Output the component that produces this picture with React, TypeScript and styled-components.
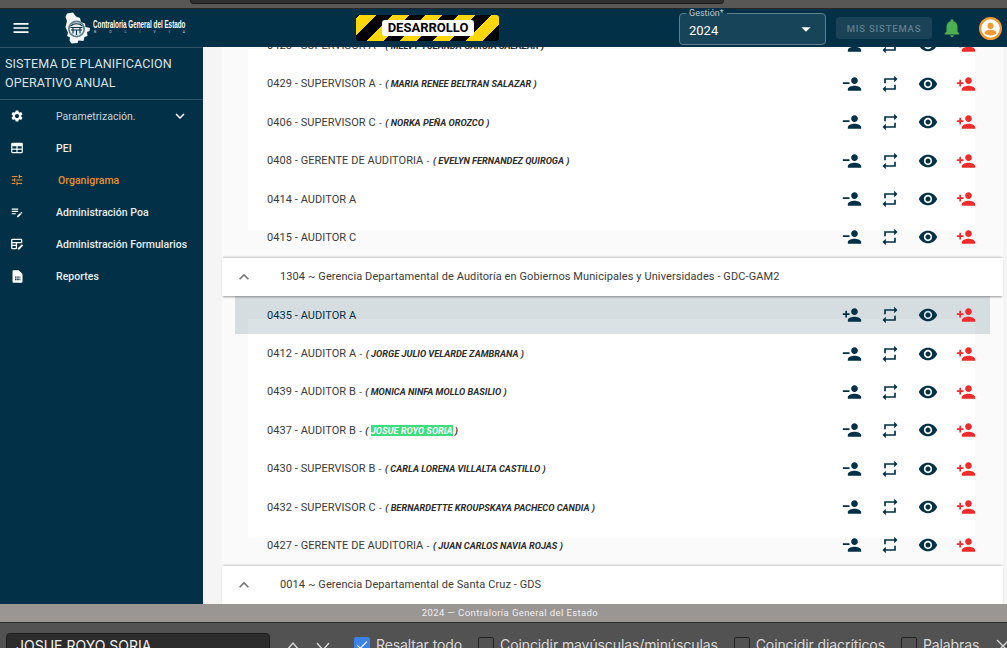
import React from "react";
import styled, { createGlobalStyle } from "styled-components";
import {
  MdMenu,
  MdSettings,
  MdExpandMore,
  MdExpandLess,
  MdTune,
  MdEditNote,
  MdNotifications,
  MdArrowDropDown,
  MdRepeat,
  MdVisibility,
  MdPersonAdd,
  MdCheck,
} from "react-icons/md";

const NAVY = "#023047";

const GlobalStyle = createGlobalStyle`
  html, body {
    margin: 0;
    height: 100%;
    overflow: hidden;
    background: #f5f5f5;
    font-family: Roboto, "Liberation Sans", sans-serif;
  }
  #root { height: 100%; }
`;

const PersonRemove = () => (
  <svg viewBox="0 0 24 24" width="20" height="20" fill="currentColor">
    <path d="M15 12c2.21 0 4-1.79 4-4s-1.79-4-4-4-4 1.79-4 4 1.79 4 4 4zM1 10v2h8v-2H1zm14 4c-2.67 0-8 1.34-8 4v2h16v-2c0-2.66-5.33-4-8-4z" />
  </svg>
);

const TableIcon = () => (
  <svg viewBox="0 0 24 24" width="14" height="14" fill="currentColor">
    <path
      fillRule="evenodd"
      d="M20 3H4c-1.100 0-2 .9-2 2v14c0 1.100.9 2 2 2h16c1.100 0 2-.9 2-2V5c0-1.100-.9-2-2-2zM4 9h7v4H4V9zm9 0h7v4h-7V9zM4 15h7v4H4v-4zm9 0h7v4h-7v-4z"
    />
  </svg>
);

const FormIcon = () => (
  <svg viewBox="0 0 24 24" width="14" height="14" fill="none" stroke="currentColor">
    <path strokeWidth="2.200" d="M20 10V5a1 1 0 0 0-1-1H4a1 1 0 0 0-1 1v14a1 1 0 0 0 1 1h7M3 9.500h17M3 14.500h9M11 9.500V20" />
    <path strokeWidth="3.200" d="M14 21l7.500-7.500" />
  </svg>
);

const ReportIcon = () => (
  <svg viewBox="0 0 24 24" width="15" height="15" fill="currentColor">
    <path
      fillRule="evenodd"
      d="M14 2H6c-1.100 0-2 .9-2 2v16c0 1.100.9 2 2 2h12c1.100 0 2-.9 2-2V8l-6-6zM8 12h2.500v2H8v-2zm3.500 0H14v2h-2.500v-2zm3.500 0h1.500v2H15v-2zM8 15h2.500v3H8v-3zm3.500 0H14v3h-2.500v-3zm3.500 0h1.500v3H15v-3z"
    />
  </svg>
);

const AvatarIcon = () => (
  <svg viewBox="0 0 24 24" width="23" height="23">
    <circle cx="12" cy="12" r="12" fill="#f39a32" />
    <circle cx="12" cy="12" r="9.600" fill="#fff" />
    <circle cx="12" cy="9.300" r="3.200" fill="#f39a32" />
    <path d="M5.800 16.600c0-2.200 4.100-3.200 6.200-3.200s6.200 1 6.200 3.200v.6c-1.300 1.100-3.800 2-6.200 2s-4.900-.9-6.200-2v-.6z" fill="#f39a32" />
  </svg>
);

const LogoMark = () => (
  <svg viewBox="0 0 28 32" width="28" height="32">
    <path
      fill="#f2f4f5"
      d="M3 1.500 9 .5l3 4 4 1.500 1 4 4 1.500.5 3.500 4.500 1-.5 3-2.500 1 .5 4-3 1-1 4-5-.5-1 2.500-6 .5-2-3 .5-3-3-1.500L4 21 1.500 15 3 9 1.500 5z"
    />
    <circle cx="12.500" cy="17" r="8.500" fill="#5d7f8e" />
    <circle cx="12.500" cy="17" r="6.800" fill="#e9eef0" />
    <path d="M6.500 15.500h12M7 18h11M9 15.500v6M12.500 18v5M16 15.500v6" stroke={NAVY} strokeWidth="1.100" fill="none" />
    <path d="M7 14c2-3 9-3 11 0" stroke={NAVY} strokeWidth="1.100" fill="none" />
  </svg>
);

const ThinChevron = ({ up }: { up?: boolean }) => (
  <svg viewBox="0 0 14 14" width="14" height="14" fill="none" stroke="#d9d9d9" strokeWidth="1.400">
    <path d={up ? "M1 9l6-7 6 7" : "M1 2l6 7 6-7"} />
  </svg>
);

const Shell = styled.div`
  height: 648px;
  display: flex;
  flex-direction: column;
  overflow: hidden;
`;

const BrowserStrip = styled.div`
  height: 8px;
  flex: none;
  background: #585756;
  border-bottom: 1px solid #262626;
  padding-left: 190px;
`;

const BrowserTab = styled.div`
  width: 532px;
  height: 3px;
  background: #2f2f2f;
  border: 1px solid #1d1d1d;
  border-top: 0;
  border-radius: 0 0 4px 4px;
`;

const Header = styled.header`
  height: 38px;
  flex: none;
  background: ${NAVY};
  display: grid;
  grid-template-columns: 356px 143px 180px 147px 10px 96px 1fr;
  align-items: center;
  color: #fff;
`;

const HeaderLeft = styled.div`
  display: flex;
  align-items: center;
  padding-left: 11px;
`;

const Burger = styled.span`
  display: flex;
  font-size: 20px;
  margin-right: 33px;
`;

const LogoText = styled.div`
  margin-left: 1px;
  margin-top: -3px;
  display: flex;
  flex-direction: column;
`;

const LogoTitle = styled.span`
  font-family: "Liberation Sans", sans-serif;
  font-size: 10px;
  font-weight: 700;
  line-height: 10px;
  color: #fff;
  white-space: nowrap;
  transform: scaleX(0.63);
  transform-origin: left center;
`;

const LogoCountry = styled.span`
  font-size: 3.500px;
  line-height: 4px;
  letter-spacing: 13px;
  color: #c7d2d8;
  padding-left: 1px;
`;

const DevBadge = styled.div`
  height: 26px;
  border-radius: 3px;
  background: repeating-linear-gradient(
    -45deg,
    #000 0 11.700px,
    #ffd600 11.700px 23.400px
  );
  display: flex;
  align-items: center;
  justify-content: center;
`;

const DevLabel = styled.span`
  width: 92px;
  height: 16px;
  background: #fff;
  border-radius: 3px;
  color: #000;
  font-size: 13px;
  font-weight: 700;
  line-height: 16px;
  text-align: center;
  margin-left: 1px;
`;

const Spacer = styled.div``;

const SelectBox = styled.div`
  position: relative;
  height: 32px;
  margin-top: 2px;
  border: 1px solid #5f7f8f;
  border-radius: 4px;
  background: #18445a;
  box-sizing: border-box;
  display: flex;
  align-items: center;
  justify-content: space-between;
  padding: 2px 9px 0 9px;
  font-size: 13px;
  color: #fff;
  svg { font-size: 22px; margin-right: -1px; margin-top: -2px; }
`;

const FloatingLabel = styled.span`
  position: absolute;
  top: -6px;
  left: 6px;
  padding: 0 3px;
  font-size: 9px;
  line-height: 10px;
  color: #b9c7cf;
  background: linear-gradient(${NAVY} 50%, #18445a 50%);
`;

const SystemsButton = styled.button`
  height: 22px;
  border: 0;
  border-radius: 3px;
  background: #1a4358;
  color: #5f7e8e;
  font-family: inherit;
  font-size: 9.500px;
  font-weight: 500;
  letter-spacing: 0.800px;
  padding: 0;
`;

const HeaderActions = styled.div`
  display: flex;
  align-items: center;
  padding-left: 9px;
  gap: 16px;
`;

const Bell = styled.span`
  display: flex;
  font-size: 22px;
  color: #4caf50;
`;

const Body = styled.div`
  height: 557px;
  flex: none;
  display: flex;
  overflow: hidden;
`;

const Sidebar = styled.aside`
  width: 203px;
  flex: none;
  background: ${NAVY};
  color: #fff;
`;

const SideTitle = styled.div`
  height: 53px;
  box-sizing: border-box;
  border-top: 1px solid #2e5568;
  border-bottom: 1px solid #2e5568;
  padding: 6px 0 0 5px;
  font-size: 12.500px;
  line-height: 19px;
  letter-spacing: 0.100px;
  color: #dbe3e7;
`;

const MenuItem = styled.div<{ $active?: boolean; $muted?: boolean }>`
  height: 32px;
  display: flex;
  align-items: center;
  color: ${({ $active, $muted }) => ($active ? "#e8912d" : $muted ? "#c9d3d9" : "#e9eef0")};
  font-size: 10.500px;
  font-weight: ${({ $muted }) => ($muted ? 400 : 500)};
  letter-spacing: 0.030px;
  padding-right: 15px;
`;

const MenuIcon = styled.span<{ $active?: boolean }>`
  width: 34px;
  flex: none;
  display: flex;
  justify-content: center;
  font-size: 14px;
  color: ${({ $active }) => ($active ? "#e8912d" : "#fff")};
`;

const MenuLabel = styled.span<{ $active?: boolean }>`
  flex: 1;
  margin-left: ${({ $active }) => ($active ? "24px" : "22px")};
  white-space: nowrap;
`;

const MenuCaret = styled.span`
  display: flex;
  font-size: 18px;
  color: #fff;
  margin-right: -1px;
`;

const Content = styled.main`
  flex: 1;
  min-width: 0;
  overflow: hidden;
  padding: 0 4px 0 19px;
`;

const Scroller = styled.div`
  margin-top: -21px;
`;

const GroupHeader = styled.div`
  position: relative;
  z-index: 1;
  height: 38px;
  margin-top: 1px;
  background: #fff;
  box-shadow: 0 2px 2px -1px rgba(0, 0, 0, 0.4), 0 -2px 2px -1px rgba(0, 0, 0, 0.2);
  display: flex;
  align-items: center;
  font-size: 11px;
  letter-spacing: 0.090px;
  color: #3a3a3a;
  svg { font-size: 20px; color: #757575; margin: 0 26px 0 12px; }
`;

const Rows = styled.div`
  padding-top: 0.300px;
  background:
    linear-gradient(#fff, #fff) 26px 23px / calc(100% - 54px) calc(100% - 50px) no-repeat,
    #fafafa;
`;

const Row = styled.div<{ $selected?: boolean }>`
  height: 38.400px;
  margin: 0 13px;
  padding: 0 5px 0 32px;
  display: flex;
  align-items: center;
  background: ${({ $selected }) => ($selected ? "rgba(2, 48, 71, 0.14)" : "transparent")};
  color: ${({ $selected }) => ($selected ? NAVY : "#3a3a3a")};
`;

const RowText = styled.div`
  flex: 1;
  font-size: 11px;
  letter-spacing: 0.060px;
  white-space: nowrap;
`;

const Dash = styled.span`
  font-size: 9.500px;
  margin: 0 1px 0 1px;
  color: #3a3a3a;
`;

const Holder = styled.span`
  font-size: 9.250px;
  font-weight: 700;
  font-style: italic;
  letter-spacing: 0;
  color: #2c2c2c;
`;

const Match = styled.mark`
  background: #3ddc7c;
  color: #fff;
`;

const RowAction = styled.span<{ $danger?: boolean }>`
  width: 38px;
  display: flex;
  justify-content: center;
  color: ${({ $danger }) => ($danger ? "#f02b2b" : NAVY)};
`;

const Footer = styled.footer`
  height: 18px;
  flex: none;
  background: #9a9694;
  border-bottom: 1px solid #2a2a2a;
  color: #f0eeee;
  font-size: 9.500px;
  letter-spacing: 0.400px;
  line-height: 18px;
  text-align: center;
  padding-left: 13px;
`;

const FindBar = styled.div`
  height: 50px;
  flex: none;
  background: #525252;
  display: flex;
  align-items: flex-start;
  font-family: Inter, "Noto Sans", sans-serif;
  font-size: 14px;
  letter-spacing: -0.100px;
  color: #d9d9d9;
  padding: 10px 0 0 6px;
  white-space: nowrap;
`;

const FindInput = styled.div`
  width: 264px;
  height: 30px;
  flex: none;
  box-sizing: border-box;
  padding-left: 9px;
  background: #2c2c2c;
  border: 1px solid #1f1f1f;
  border-radius: 4px;
  color: #f2f2f2;
  letter-spacing: 0;
  line-height: 24px;
`;

const NavGroup = styled.div`
  display: flex;
  flex: none;
  gap: 16px;
  margin: 8px 24px 0 16px;
`;

const CheckOption = styled.label`
  display: flex;
  flex: none;
  gap: 6px;
  margin-right: 16px;
  padding-top: 4px;
  line-height: 15px;
`;

const CheckBox = styled.span<{ $checked?: boolean }>`
  width: 16px;
  height: 16px;
  box-sizing: border-box;
  flex: none;
  border-radius: 2px;
  border: 1px solid ${({ $checked }) => ($checked ? "#3b82e6" : "#222")};
  background: ${({ $checked }) => ($checked ? "#3b82e6" : "transparent")};
  color: #fff;
  font-size: 14px;
  display: flex;
`;

const FindClose = styled.svg`
  flex: none;
  width: 14px;
  height: 14px;
  margin: 6px 0 0 1px;
`;

type Post = { code: string; holder?: string; match?: string; add?: boolean; selected?: boolean };

const firstGroup: Post[] = [
  { code: "0428 - SUPERVISOR A", holder: "MELVY YOLANDA GARCIA SALAZAR" },
  { code: "0429 - SUPERVISOR A", holder: "MARIA RENEE BELTRAN SALAZAR" },
  { code: "0406 - SUPERVISOR C", holder: "NORKA PEÑA OROZCO" },
  { code: "0408 - GERENTE DE AUDITORIA", holder: "EVELYN FERNANDEZ QUIROGA" },
  { code: "0414 - AUDITOR A" },
  { code: "0415 - AUDITOR C" },
];

const secondGroup: Post[] = [
  { code: "0435 - AUDITOR A", add: true, selected: true },
  { code: "0412 - AUDITOR A", holder: "JORGE JULIO VELARDE ZAMBRANA" },
  { code: "0439 - AUDITOR B", holder: "MONICA NINFA MOLLO BASILIO" },
  { code: "0437 - AUDITOR B", match: "JOSUE ROYO SORIA" },
  { code: "0430 - SUPERVISOR B", holder: "CARLA LORENA VILLALTA CASTILLO" },
  { code: "0432 - SUPERVISOR C", holder: "BERNARDETTE KROUPSKAYA PACHECO CANDIA" },
  { code: "0427 - GERENTE DE AUDITORIA", holder: "JUAN CARLOS NAVIA ROJAS" },
];

const menu = [
  { label: "Parametrización.", icon: <MdSettings />, muted: true, caret: true },
  { label: "PEI", icon: <TableIcon /> },
  { label: "Organigrama", icon: <MdTune />, active: true },
  { label: "Administración Poa", icon: <MdEditNote /> },
  { label: "Administración Formularios", icon: <FormIcon /> },
  { label: "Reportes", icon: <ReportIcon /> },
];

const PostRow = ({ post }: { post: Post }) => (
  <Row $selected={post.selected}>
    <RowText>
      {post.code}
      {post.holder && (
        <>
          <Dash> - </Dash>
          <Holder>( {post.holder} )</Holder>
        </>
      )}
      {post.match && (
        <>
          <Dash> - </Dash>
          <Holder>
            ( <Match>{post.match}</Match> )
          </Holder>
        </>
      )}
    </RowText>
    <RowAction>{post.add ? <MdPersonAdd size={20} /> : <PersonRemove />}</RowAction>
    <RowAction>
      <MdRepeat size={20} />
    </RowAction>
    <RowAction>
      <MdVisibility size={20} />
    </RowAction>
    <RowAction $danger>
      <MdPersonAdd size={20} />
    </RowAction>
  </Row>
);

const App = () => (
  <Shell>
    <GlobalStyle />
    <BrowserStrip>
      <BrowserTab />
    </BrowserStrip>
    <Header>
      <HeaderLeft>
        <Burger>
          <MdMenu />
        </Burger>
        <LogoMark />
        <LogoText>
          <LogoTitle>Contraloría General del Estado</LogoTitle>
          <LogoCountry>BOLIVIA</LogoCountry>
        </LogoText>
      </HeaderLeft>
      <DevBadge>
        <DevLabel>DESARROLLO</DevLabel>
      </DevBadge>
      <Spacer />
      <SelectBox>
        <FloatingLabel>Gestión*</FloatingLabel>
        2024
        <MdArrowDropDown />
      </SelectBox>
      <Spacer />
      <SystemsButton>MIS SISTEMAS</SystemsButton>
      <HeaderActions>
        <Bell>
          <MdNotifications />
        </Bell>
        <AvatarIcon />
      </HeaderActions>
    </Header>
    <Body>
      <Sidebar>
        <SideTitle>
          SISTEMA DE PLANIFICACION
          <br />
          OPERATIVO ANUAL
        </SideTitle>
        <nav>
          {menu.map((item) => (
            <MenuItem key={item.label} $active={item.active} $muted={item.muted}>
              <MenuIcon $active={item.active}>{item.icon}</MenuIcon>
              <MenuLabel $active={item.active}>{item.label}</MenuLabel>
              {item.caret && (
                <MenuCaret>
                  <MdExpandMore />
                </MenuCaret>
              )}
            </MenuItem>
          ))}
        </nav>
      </Sidebar>
      <Content>
        <Scroller>
          <Rows>
            {firstGroup.map((post) => (
              <PostRow key={post.code} post={post} />
            ))}
          </Rows>
          <GroupHeader>
            <MdExpandLess />
            1304 ~ Gerencia Departamental de Auditoría en Gobiernos Municipales y Universidades - GDC-GAM2
          </GroupHeader>
          <Rows>
            {secondGroup.map((post) => (
              <PostRow key={post.code} post={post} />
            ))}
          </Rows>
          <GroupHeader>
            <MdExpandLess />
            0014 ~ Gerencia Departamental de Santa Cruz - GDS
          </GroupHeader>
        </Scroller>
      </Content>
    </Body>
    <Footer>2024 — Contraloría General del Estado</Footer>
    <FindBar>
      <FindInput>JOSUE ROYO SORIA</FindInput>
      <NavGroup>
        <ThinChevron up />
        <ThinChevron />
      </NavGroup>
      <CheckOption>
        <CheckBox $checked>
          <MdCheck />
        </CheckBox>
        Resaltar todo
      </CheckOption>
      <CheckOption>
        <CheckBox />
        Coincidir mayúsculas/minúsculas
      </CheckOption>
      <CheckOption>
        <CheckBox />
        Coincidir diacríticos
      </CheckOption>
      <CheckOption>
        <CheckBox />
        Palabras
      </CheckOption>
      <FindClose viewBox="0 0 14 14" fill="none" stroke="#d9d9d9" strokeWidth="1.300">
        <path d="M1 1l12 12M13 1L1 13" />
      </FindClose>
    </FindBar>
  </Shell>
);

export default App;
